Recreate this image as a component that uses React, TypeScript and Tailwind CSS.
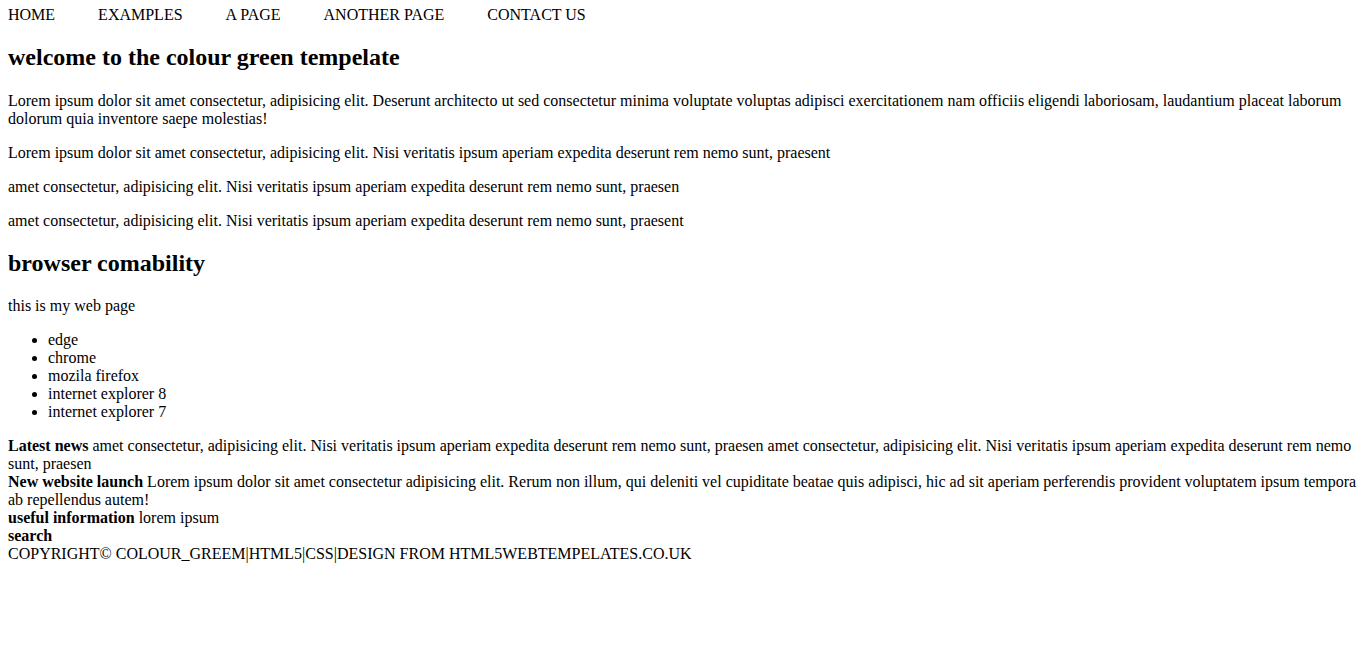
export default function App() {
  const nav = ['HOME', 'EXAMPLES', 'A PAGE', 'ANOTHER PAGE', 'CONTACT US'];
  const browsers = ['edge', 'chrome', 'mozila firefox', 'internet explorer 8', 'internet explorer 7'];

  return (
    <div className="min-h-screen bg-white px-2 pt-[6px] pb-2 font-['Liberation_Serif',serif] text-base leading-[18px] text-black">
      <nav>
        {nav.map((item) => (
          <a key={item} href="#" className="mr-[43px] inline-block">
            {item}
          </a>
        ))}
      </nav>

      <h2 className="my-[20px] text-2xl leading-[27.6px] font-bold">welcome to the colour green tempelate</h2>
      <p className="my-4">
        Lorem ipsum dolor sit amet consectetur, adipisicing elit. Deserunt architecto ut sed consectetur minima
        voluptate voluptas adipisci exercitationem nam officiis eligendi laboriosam, laudantium placeat laborum
        dolorum quia inventore saepe molestias!
      </p>
      <p className="my-4">
        Lorem ipsum dolor sit amet consectetur, adipisicing elit. Nisi veritatis ipsum aperiam expedita deserunt rem
        nemo sunt, praesent
      </p>
      <p className="my-4">
        amet consectetur, adipisicing elit. Nisi veritatis ipsum aperiam expedita deserunt rem nemo sunt, praesen
      </p>
      <p className="my-4">
        amet consectetur, adipisicing elit. Nisi veritatis ipsum aperiam expedita deserunt rem nemo sunt, praesent
      </p>

      <h2 className="my-[20px] text-2xl leading-[27.6px] font-bold">browser comability</h2>
      <p className="my-4">this is my web page</p>
      <ul className="my-4 list-disc pl-10">
        {browsers.map((b) => (
          <li key={b}>{b}</li>
        ))}
      </ul>

      <div>
        <b>Latest news</b> amet consectetur, adipisicing elit. Nisi veritatis ipsum aperiam expedita deserunt rem
        nemo sunt, praesen amet consectetur, adipisicing elit. Nisi veritatis ipsum aperiam expedita deserunt rem
        nemo sunt, praesen
      </div>
      <div>
        <b>New website launch</b> Lorem ipsum dolor sit amet consectetur adipisicing elit. Rerum non illum, qui
        deleniti vel cupiditate beatae quis adipisci, hic ad sit aperiam perferendis provident voluptatem ipsum
        tempora ab repellendus autem!
      </div>
      <div>
        <b>useful information</b> lorem ipsum
      </div>
      <div>
        <b>search</b>
      </div>
      <div>COPYRIGHT© COLOUR_GREEM|HTML5|CSS|DESIGN FROM HTML5WEBTEMPELATES.CO.UK</div>
    </div>
  );
}
